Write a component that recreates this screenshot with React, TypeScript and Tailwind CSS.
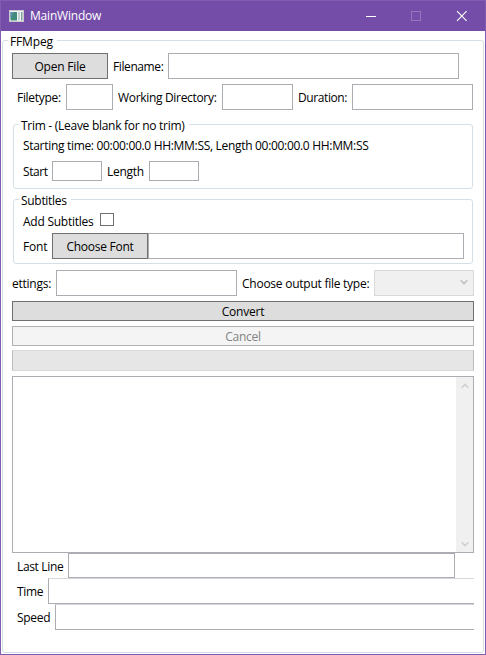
import type { ReactNode } from "react";

function Label({ children, className = "" }: { children: ReactNode; className?: string }) {
  return <span className={`block shrink-0 whitespace-nowrap ${className}`}>{children}</span>;
}

function Box({ className = "" }: { className?: string }) {
  return <div className={`shrink-0 border border-[#abadb3] bg-white ${className}`} />;
}

function Group({
  title,
  gap,
  tracking,
  className = "",
  children,
}: {
  title: string;
  gap: string;
  tracking: string;
  className?: string;
  children: ReactNode;
}) {
  return (
    <section className={`relative shrink-0 rounded-[3px] border border-[#d5dfe5] ${className}`}>
      <h2 className={`absolute -top-[8px] left-[5px] h-[17px] whitespace-nowrap bg-white pl-[2px] leading-[17px] ${gap} ${tracking}`}>{title}</h2>
      {children}
    </section>
  );
}

function Chevron({ up = false, color }: { up?: boolean; color: string }) {
  return (
    <svg width="8" height="6" viewBox="0 0 8 6" fill="none" stroke={color} strokeWidth="1.6">
      <path d={up ? "M0.7 4.8 4 1.5 7.3 4.8" : "M0.7 1.2 4 4.5 7.3 1.2"} />
    </svg>
  );
}

export default function App() {
  return (
    <div className="flex h-[655px] w-[486px] flex-col overflow-hidden border border-[#805db1] bg-white font-['Open_Sans','Noto_Sans',sans-serif] text-[12px] leading-4 text-black">
      <header className="-mt-px flex h-[31px] shrink-0 items-center border-t border-[#805db1] bg-[#744da9] text-white">
        <svg className="ml-2 shrink-0" width="15" height="12" viewBox="0 0 15 12">
          <rect width="15" height="12" fill="#c9c9cd" />
          <rect x="1" y="1" width="13" height="10" fill="#f7f8f8" />
          <rect x="1.5" y="2" width="6.5" height="8.5" fill="#438b7d" />
          <path d="M1.5 2H5L1.5 8Z" fill="#5f8fae" />
          <rect x="9" y="2" width="2" height="8.5" fill="#c3d4d0" />
          <rect x="12" y="2" width="1.5" height="8.5" fill="#7f9c99" />
        </svg>
        <Label className="ml-[6px] tracking-[-0.2px]">MainWindow</Label>
        <svg className="ml-auto mr-[17px] shrink-0" width="102" height="12" viewBox="0 0 102 12" fill="none">
          <path d="M0 6.5H10" stroke="#fff" />
          <rect x="45.5" y="1.5" width="9" height="9" stroke="#9675bf" />
          <path d="M91 1.2 100.6 10.8M100.6 1.2 91 10.8" stroke="#fff" strokeWidth="1.1" />
        </svg>
      </header>

      <Group title="FFMpeg" gap="w-[49px]" tracking="tracking-[-0.15px]" className="ml-px mt-[9px] h-[613px] w-[482px]">
        <div className="ml-[9px] mt-[12px] flex w-[462px] flex-col overflow-hidden">
          <div className="flex h-[26px] items-center">
            <button className="h-[26px] w-24 shrink-0 border border-[#707070] bg-[#ddd] pt-[2px] tracking-[-0.2px]">Open File</button>
            <Label className="w-[60px] pl-[5px] pt-[2px] tracking-[-0.4px]">Filename:</Label>
            <Box className="h-[26px] w-[291px]" />
          </div>

          <div className="mt-[5px] flex h-[26px] items-center">
            <Label className="w-[54px] pl-[5px] pt-[2px] tracking-[-0.3px]">Filetype:</Label>
            <Box className="h-[26px] w-[47px]" />
            <Label className="w-[109px] pl-[5px] pt-[2px] tracking-[-0.32px]">Working Directory:</Label>
            <Box className="h-[26px] w-[71px]" />
            <Label className="w-[59px] pl-[5px] pt-[2px] tracking-[-0.4px]">Duration:</Label>
            <Box className="h-[26px] w-[121px]" />
          </div>

          <div className="pt-[14px]">
            <Group title="Trim - (Leave blank for no trim)" gap="w-[170px]" tracking="tracking-[-0.28px]" className="ml-px h-[65px] w-[460px]">
              <Label className="ml-[9px] mt-[13px] tracking-[-0.31px]">Starting time: 00:00:00.0 HH:MM:SS, Length 00:00:00.0 HH:MM:SS</Label>
              <div className="ml-[9px] mt-[7px] flex h-5 items-center">
                <Label className="w-[29px] pt-[2px] tracking-[-0.4px]">Start</Label>
                <Box className="h-5 w-[50px]" />
                <Label className="w-[47px] pl-[5px] pt-[2px] tracking-[-0.3px]">Length</Label>
                <Box className="h-5 w-[50px]" />
              </div>
            </Group>
          </div>

          <div className="pt-[10px]">
            <Group title="Subtitles" gap="w-[52px]" tracking="tracking-[-0.3px]" className="ml-px h-[65px] w-[460px]">
              <div className="ml-[9px] mt-[13px] flex h-[14px] items-start">
                <Label className="w-[77px] pt-px tracking-[-0.25px]">Add Subtitles</Label>
                <div className="h-[13px] w-[14px] border border-[#707070]" />
              </div>
              <div className="ml-[9px] mt-[6px] flex h-[26px] items-center">
                <Label className="w-[29px] pt-[2px] tracking-[-0.2px]">Font</Label>
                <button className="h-[26px] w-24 shrink-0 border border-[#707070] bg-[#ddd] pt-[2px] tracking-[-0.25px]">Choose Font</button>
                <Box className="h-[26px] w-[316px]" />
              </div>
            </Group>
          </div>

          <div className="mt-[6px] flex h-[26px] items-center">
            <Label className="w-[44px] pt-[2px] tracking-[-0.25px]">ettings:</Label>
            <Box className="h-[26px] w-[181px]" />
            <Label className="w-[137px] pl-[5px] pt-[2px] tracking-[-0.25px]">Choose output file type:</Label>
            <div className="flex h-[26px] w-[100px] shrink-0 items-center justify-end border border-[#d9d9d9] bg-[#f0f0f0] pb-[3px] pr-[5px]">
              <Chevron color="#bfbfbf" />
            </div>
          </div>

          <button className="mt-[5px] h-5 shrink-0 border border-[#707070] bg-[#ddd] pt-[2px] leading-4 tracking-[-0.2px]">Convert</button>
          <button className="mt-[5px] h-5 shrink-0 border border-[#adb2b5] bg-[#f4f4f4] pt-[2px] leading-4 tracking-[-0.3px] text-[#838383]">Cancel</button>
          <div className="mt-1 h-[21px] shrink-0 border border-[#dadada] border-l-[#bcbcbc] border-r-[#bcbcbc] bg-[#e6e6e6]" />

          <div className="mt-[5px] flex h-[177px] shrink-0 justify-end border border-[#abadb3]">
            <div className="flex w-[17px] flex-col items-center justify-between bg-[#f0f0f0] pb-[5px] pt-[6px]">
              <Chevron up color="#cfcfcf" />
              <Chevron color="#cfcfcf" />
            </div>
          </div>

          <div className="flex h-[25px] items-center">
            <Label className="w-14 pl-[5px] pt-[2px] tracking-[-0.35px]">Last Line</Label>
            <Box className="h-[25px] w-[387px]" />
          </div>
          <div className="flex h-[26px] items-center">
            <Label className="w-9 pl-[5px] pt-[2px] tracking-[-0.3px]">Time</Label>
            <Box className="h-[26px] w-[500px] border-t-[#d5d6d9]" />
          </div>
          <div className="flex h-[26px] items-center">
            <Label className="w-[43px] pl-[5px] pt-[2px] tracking-[-0.3px]">Speed</Label>
            <Box className="h-[26px] w-[500px] border-t-[#d5d6d9]" />
          </div>
        </div>
      </Group>
    </div>
  );
}
